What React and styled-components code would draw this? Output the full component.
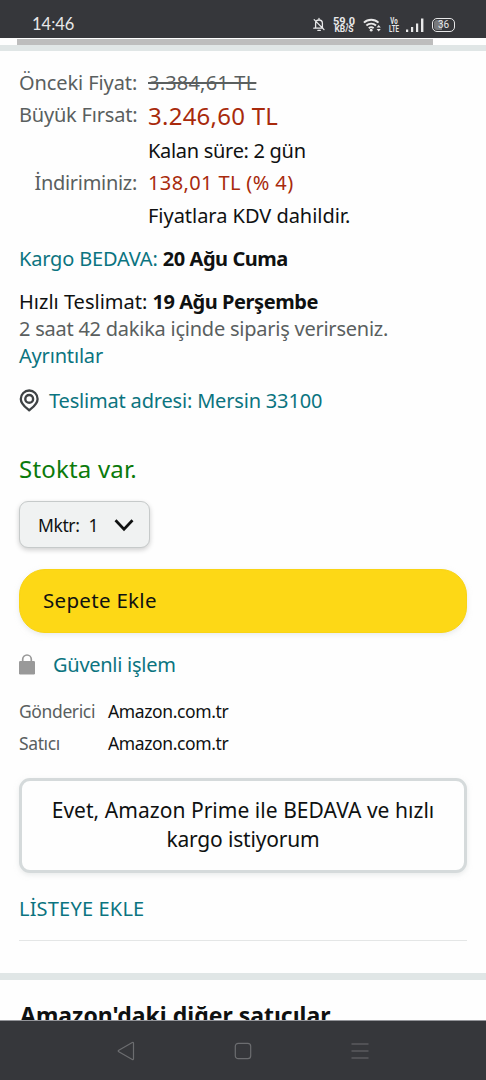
import React from 'react'
import styled, { createGlobalStyle } from 'styled-components'

const shipping = [
  { label: 'Gönderici', value: 'Amazon.com.tr' },
  { label: 'Satıcı', value: 'Amazon.com.tr' },
]

function BellOffIcon() {
  return (
    <svg width="12" height="15" viewBox="0 0 12 15" fill="none" stroke="#e8e8e9" strokeWidth="1.3">
      <path d="M2.6 10.8V6.4a3.4 3.4 0 0 1 6.8 0v4M.8 11.2h9.2M4.9 13.4h2.4M6 3V1.4M1.2 2.6l9.8 10" strokeLinecap="round" />
    </svg>
  )
}

function WifiIcon() {
  return (
    <svg width="19" height="14" viewBox="0 0 19 14" fill="none" stroke="#e8e8e9" strokeWidth="1.9">
      <path d="M.9 4.6a10.6 10.6 0 0 1 14.6 0M3.4 7.5a7 7 0 0 1 9.6 0M5.8 10.2a3.6 3.6 0 0 1 4.8 0" />
      <circle cx="8.2" cy="12.2" r="1.4" fill="#e8e8e9" stroke="none" />
      <path d="M13.6 9.6 15.7 7l2.1 2.6zM13.6 10.9l2.1 2.6 2.1-2.6z" fill="#e8e8e9" stroke="none" />
    </svg>
  )
}

function SignalIcon() {
  return (
    <svg width="18" height="14" viewBox="0 0 18 14" fill="#e8e8e9">
      <rect x="0" y="11.5" width="2.2" height="2.5" />
      <rect x="5" y="9" width="2.2" height="5" />
      <rect x="10" y="5.5" width="2.2" height="8.5" />
      <rect x="15" y="0.5" width="2.4" height="13.5" />
    </svg>
  )
}

function PinIcon() {
  return (
    <svg width="20" height="23" viewBox="0 0 20 23" fill="none" stroke="#3f4345">
      <path d="M10.2 21.3C7 18.6 1.8 15.2 1.8 9.9a8.4 8.4 0 0 1 16.8 0c0 5.3-5.2 8.700-8.400 11.400z" strokeWidth="2.3" strokeLinejoin="round" />
      <circle cx="10.2" cy="9.9" r="3.9" strokeWidth="2.4" />
    </svg>
  )
}

function LockIcon() {
  return (
    <svg width="16" height="21" viewBox="0 0 16 21">
      <path d="M3.7 9V5.3a4.3 4.3 0 0 1 8.6 0V9" fill="none" stroke="#999" strokeWidth="1.7" />
      <rect y="7" width="16" height="13.5" rx="1.2" fill="#999" />
    </svg>
  )
}

function App() {
  return (
    <Screen>
      <GlobalStyle />
      <StatusBar>
        <Clock>14:46</Clock>
        <StatusIcons>
          <BellOffIcon />
          <NetSpeed>
            <b>59.0</b>
            <small>KB/S</small>
          </NetSpeed>
          <WifiIcon />
          <VoLte>
            <span>Vo</span>
            <span>LTE</span>
          </VoLte>
          <SignalIcon />
          <Battery>36</Battery>
        </StatusIcons>
      </StatusBar>
      <ScrollTrack>
        <ScrollThumb />
      </ScrollTrack>
      <Band $height={6} />

      <Page>
        <PriceTable>
          <PriceLabel>Önceki Fiyat:</PriceLabel>
          <OldPrice>3.384,61 TL</OldPrice>
          <PriceLabel $track={-0.2}>Büyük Fırsat:</PriceLabel>
          <DealPrice>3.246,60 TL</DealPrice>
          <PriceNote $track={-0.3}>Kalan süre: 2 gün</PriceNote>
          <PriceLabel $track={-0.3}>İndiriminiz:</PriceLabel>
          <Savings>138,01 TL (% 4)</Savings>
          <PriceNote>Fiyatlara KDV dahildir.</PriceNote>
        </PriceTable>

        <Delivery>
          <Line><Link>Kargo BEDAVA:</Link> <Strong>20 Ağu Cuma</Strong></Line>
        </Delivery>
        <Delivery $top={16}>
          <Line>Hızlı Teslimat: <Strong>19 Ağu Perşembe</Strong></Line>
          <Line $muted>2 saat 42 dakika içinde sipariş verirseniz.</Line>
          <Line><Link>Ayrıntılar</Link></Line>
        </Delivery>
        <Address>
          <PinIcon />
          <Link>Teslimat adresi: Mersin 33100</Link>
        </Address>

        <Stock>Stokta var.</Stock>
        <Quantity>
          <span>Mktr:</span>
          <span>1</span>
          <svg width="20" height="14" viewBox="0 0 20 14" fill="none" stroke="#0f1111" strokeWidth="2.7">
            <path d="M1.5 2.2 10 11.2l8.5-9" />
          </svg>
        </Quantity>
        <CartButton>Sepete Ekle</CartButton>

        <Secure>
          <LockIcon />
          <Link>Güvenli işlem</Link>
        </Secure>
        <Sellers>
          {shipping.map((row) => (
            <SellerRow key={row.label}>
              <SellerLabel>{row.label}</SellerLabel>
              <span>{row.value}</span>
            </SellerRow>
          ))}
        </Sellers>

        <PrimeButton>
          <PrimeLine $track={0.04}>Evet, Amazon Prime ile BEDAVA ve hızlı</PrimeLine>
          <PrimeLine $track={-0.17}>kargo istiyorum</PrimeLine>
        </PrimeButton>
        <ListLink>LİSTEYE EKLE</ListLink>
        <Divider />
      </Page>

      <Band $height={7} />
      <OtherSellers>Amazon'daki diğer satıcılar</OtherSellers>

      <NavBar>
        <svg width="18" height="20" viewBox="0 0 18 20" fill="none" stroke="#6c6d70" strokeWidth="1.2" strokeLinejoin="round">
          <path d="M15.3 1.5 1.8 9.3q-1.2.7 0 1.4l13.5 7.8q1.2.5 1.2-.8V2.3q0-1.3-1.2-.8z" />
        </svg>
        <svg width="18" height="18" viewBox="0 0 18 18" fill="none" stroke="#6c6d70" strokeWidth="1.2">
          <rect x="1.3" y="1.3" width="15.4" height="15.4" rx="3" />
        </svg>
        <svg width="18" height="18" viewBox="0 0 18 18" stroke="#6c6d70" strokeWidth="1.2">
          <path d="M.5 2h17M.5 9h17M.5 16h17" />
        </svg>
      </NavBar>
    </Screen>
  )
}

const GlobalStyle = createGlobalStyle`
  * {
    box-sizing: border-box;
  }

  body {
    margin: 0;
    background: #fefefe;
  }
`

const Screen = styled.div`
  width: 486px;
  height: 1080px;
  display: flex;
  flex-direction: column;
  overflow: hidden;
  background: #fefefe;
  color: #0f1111;
  font-family: 'Noto Sans', sans-serif;
  font-size: 20px;
  white-space: nowrap;
`

const StatusBar = styled.header`
  height: 38px;
  flex-shrink: 0;
  display: flex;
  justify-content: space-between;
  padding: 10px 31px 0 32px;
  background: #36373b;
  color: #e8e8e9;
`

const Clock = styled.span`
  font-family: Lato, sans-serif;
  font-size: 16.5px;
  line-height: 29px;
`

const StatusIcons = styled.div`
  height: 29px;
  display: flex;
  align-items: center;
  gap: 8px;
`

const NetSpeed = styled.div`
  display: flex;
  flex-direction: column;
  align-items: center;
  width: 22px;
  font-family: Roboto, sans-serif;

  b {
    font-size: 11px;
    line-height: 9px;
  }

  small {
    font-size: 8.5px;
    font-weight: 700;
    line-height: 7px;
  }
`

const VoLte = styled.div`
  display: flex;
  flex-direction: column;
  align-items: center;
  width: 10px;
  margin: 0 -1px;
  font-family: Roboto, sans-serif;
  font-size: 9px;
  font-weight: 700;
  line-height: 8px;
  transform: scaleX(0.68);
`

const Battery = styled.div`
  width: 23px;
  height: 14px;
  border: 1.5px solid #e8e8e9;
  border-radius: 5px;
  background: linear-gradient(90deg, #77787b 45%, #36373b 45%);
  background-clip: content-box;
  padding: 1px;
  font-family: Roboto, sans-serif;
  font-size: 10px;
  line-height: 10px;
  text-align: center;
`

const ScrollTrack = styled.div`
  height: 7px;
  flex-shrink: 0;
  padding: 1px 53px 0 17px;
`

const ScrollThumb = styled.div`
  height: 6px;
  background: #bdbdbd;
`

const Band = styled.div`
  height: ${(p) => p.$height}px;
  flex-shrink: 0;
  background: #e0e6e6;
`

const Page = styled.main`
  height: 922px;
  flex-shrink: 0;
  display: flex;
  flex-direction: column;
  padding: 16px 19px 0;
`

const PriceTable = styled.div`
  display: grid;
  grid-template-columns: 118px 1fr;
  grid-template-rows: 32px 36px 32px 33px 32px;
  column-gap: 11px;
  line-height: 32px;
`

const PriceLabel = styled.span`
  color: #5a5f5f;
  text-align: right;
  letter-spacing: ${(p) => p.$track || -0.1}px;
`

const OldPrice = styled.span`
  color: #5a5f5f;
  text-decoration: line-through;
  letter-spacing: 0.2px;
`

const DealPrice = styled.span`
  color: #a82a0c;
  font-size: 24px;
  line-height: 34px;
  letter-spacing: 0.25px;
`

const PriceNote = styled.span`
  grid-column: 2;
  letter-spacing: ${(p) => p.$track || -0.03}px;
`

const Savings = styled.span`
  color: #a82a0c;
  letter-spacing: 0.38px;
`

const Delivery = styled.section`
  margin-top: ${(p) => p.$top || 13}px;
`

const Line = styled.p`
  margin: 0;
  line-height: 27px;
  color: ${(p) => (p.$muted ? '#5a5f5f' : '#0f1111')};
  letter-spacing: ${(p) => (p.$muted ? -0.24 : 0)}px;
`

const Link = styled.a`
  color: #0b7480;
  letter-spacing: -0.18px;
`

const Strong = styled.b`
  font-weight: 700;
  letter-spacing: -0.45px;
`

const Address = styled.div`
  display: flex;
  align-items: center;
  gap: 10px;
  height: 27px;
  margin-top: 18px;
`

const Stock = styled.div`
  margin-top: 38px;
  font-size: 24px;
  line-height: 33px;
  letter-spacing: 0.2px;
  color: #0b7a0b;
`

const Quantity = styled.button`
  display: flex;
  align-items: center;
  width: 131px;
  height: 47px;
  margin-top: 16px;
  padding: 0 0 0 18px;
  border: 1px solid #c6caca;
  border-radius: 9px;
  background: #f0f2f2;
  box-shadow: 0 2px 5px rgba(15, 17, 17, 0.2);
  color: #0f1111;
  font: 17.5px 'Noto Sans', sans-serif;
  letter-spacing: -0.4px;

  span + span {
    margin-left: 9px;
  }

  svg {
    margin-left: 16px;
  }
`

const CartButton = styled.button`
  height: 64px;
  margin-top: 21px;
  padding: 0 23px 2px;
  border: 1px solid #f9d414;
  border-radius: 26px;
  background: #fdd816;
  box-shadow: 0 2px 5px rgba(213, 217, 217, 0.5);
  color: #0f1111;
  font: 20.5px 'Noto Sans', sans-serif;
  letter-spacing: 0.3px;
  text-align: left;
`

const Secure = styled.div`
  display: flex;
  align-items: center;
  gap: 18px;
  height: 27px;
  margin-top: 18px;

  ${Link} {
    letter-spacing: -0.27px;
  }
`

const Sellers = styled.div`
  margin-top: 17px;
  font-size: 17.5px;
  letter-spacing: -0.38px;
`

const SellerRow = styled.div`
  display: grid;
  grid-template-columns: 89px 1fr;
  line-height: 32px;
`

const SellerLabel = styled.span`
  color: #5a5f5f;
`

const PrimeButton = styled.button`
  display: flex;
  flex-direction: column;
  align-items: center;
  height: 95px;
  margin-top: 19px;
  padding: 15px 0 0;
  border: 3px solid #d5dadb;
  border-radius: 11px;
  background: #fefefe;
  box-shadow: 0 2px 5px rgba(213, 217, 217, 0.5);
  color: #0f1111;
  font: 21px/29px 'Noto Sans', sans-serif;
`

const PrimeLine = styled.span`
  letter-spacing: ${(p) => p.$track}px;
`

const ListLink = styled.a`
  margin-top: 22px;
  line-height: 27px;
  letter-spacing: 0.18px;
  color: #0b7480;
`

const Divider = styled.hr`
  width: 100%;
  height: 1px;
  margin: 18px 0 0;
  border: 0;
  background: #e4e6e6;
`

const OtherSellers = styled.h2`
  height: 40px;
  flex-shrink: 0;
  margin: 0;
  padding: 19px 20px 0;
  overflow: hidden;
  font-size: 23px;
  font-weight: 700;
  line-height: 32px;
`

const NavBar = styled.nav`
  height: 60px;
  flex-shrink: 0;
  display: flex;
  justify-content: center;
  align-items: center;
  gap: 99px;
  border-top: 1px solid #94959a;
  background: #36373b;
`

export default App
